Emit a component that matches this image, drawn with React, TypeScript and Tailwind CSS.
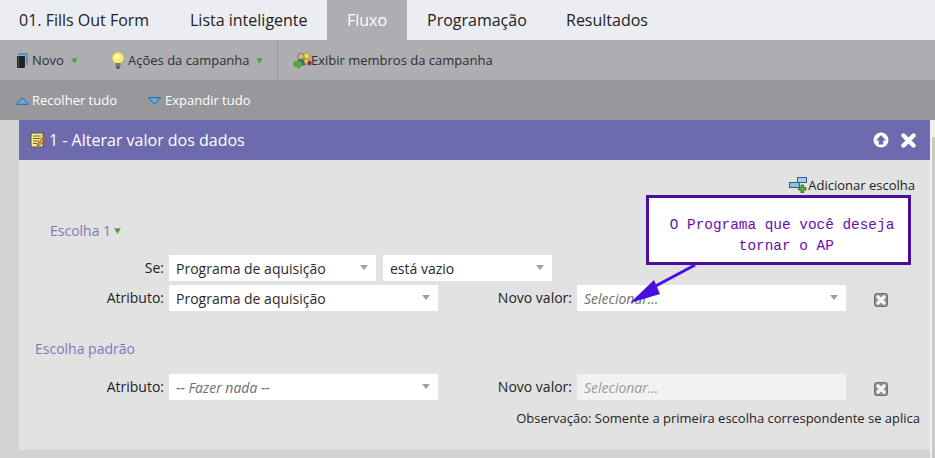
const sans = "font-['Open_Sans',sans-serif]";

function GreenCaret({ className = "" }: { className?: string }) {
  return (
    <svg width="7" height="6" viewBox="0 0 7 6" className={className}>
      <path d="M0.300 0.300H6.700L3.500 5.800Z" fill="#4f9a34" stroke="#86bd68" strokeWidth="0.500" />
    </svg>
  );
}

function Book() {
  return (
    <svg width="12" height="16" viewBox="0 0 12 16">
      <path d="M3 2.500V1h8v11" fill="none" stroke="#3f86c4" strokeWidth="1.400" />
      <rect x="1" y="3" width="8" height="12" rx="1" fill="#222" />
      <rect x="2" y="4" width="1" height="10" fill="#555" />
    </svg>
  );
}

function Bulb() {
  return (
    <svg width="14" height="17" viewBox="0 0 14 17">
      <circle cx="7" cy="6" r="5.600" fill="#fbf06a" stroke="#d8c850" strokeWidth="0.800" />
      <circle cx="6" cy="4.800" r="2.400" fill="#fffbc8" />
      <rect x="4.500" y="11" width="5" height="4" fill="#77777c" />
      <rect x="5.500" y="15" width="3" height="1.500" fill="#333" />
    </svg>
  );
}

function People() {
  return (
    <svg width="19" height="17" viewBox="0 0 19 17" className="mr-[-1px]">
      <circle cx="13.500" cy="4" r="3.200" fill="#f4d860" stroke="#8c7430" strokeWidth="0.600" />
      <path d="M10 12c0-3.500 1-5 3.500-5s3.500 1.500 3.500 5z" fill="#e8c45a" stroke="#8c7430" strokeWidth="0.600" />
      <circle cx="8" cy="4.500" r="3.200" fill="#d8b48a" stroke="#5d4a38" strokeWidth="0.600" />
      <path d="M4.500 13c0-4 1-5.500 3.500-5.500s3.500 1.500 3.500 5.500z" fill="#3f6f9f" stroke="#2d4a68" strokeWidth="0.600" />
      <circle cx="16.500" cy="11" r="2.200" fill="#a82a2a" />
      <path d="M1 10h4V7.500l5 4.500-5 4.500V14H1z" fill="#58b038" stroke="#2f7a20" strokeWidth="0.600" />
    </svg>
  );
}

function Up() {
  return (
    <svg width="13" height="8" viewBox="0 0 13 8">
      <path d="M6.500 0.700L12.500 7.300H0.500Z" fill="#62aee4" stroke="#1f5f92" strokeWidth="0.900" />
    </svg>
  );
}

function Down() {
  return (
    <svg width="13" height="8" viewBox="0 0 13 8">
      <path d="M0.500 0.700H12.500L6.500 7.300Z" fill="#62aee4" stroke="#1f5f92" strokeWidth="0.900" />
    </svg>
  );
}

function Note() {
  return (
    <svg width="16" height="16" viewBox="0 0 16 16">
      <rect x="1" y="1" width="12" height="14" fill="#f8ec9a" stroke="#5a5230" strokeWidth="1" />
      <path d="M3 4h8M3 6.500h8M3 9h6M3 11.500h4" stroke="#6b6235" strokeWidth="1" />
      <path d="M7 14l1-3 6-6 2 2-6 6z" fill="#e8a040" stroke="#7a3a20" strokeWidth="0.700" />
      <path d="M12.500 6.500l2 2" stroke="#c03a30" strokeWidth="1.400" />
    </svg>
  );
}

function AddChoice() {
  return (
    <svg width="19" height="16" viewBox="0 0 19 16">
      <rect x="0.500" y="5.500" width="10" height="5" fill="#8cc0e4" stroke="#2e5f88" />
      <rect x="8.500" y="0.500" width="9" height="5" fill="#a8d0ec" stroke="#2e5f88" />
      <path d="M12 8h2.500V10.500H17V13h-2.500v3H12v-3H9.500V10.500H12z" fill="#55b040" stroke="#1f6a20" strokeWidth="0.800" />
    </svg>
  );
}

function RemoveBtn() {
  return (
    <svg width="14" height="14" viewBox="0 0 14 14">
      <rect x="0.500" y="0.500" width="13" height="13" rx="2" fill="#8f8f8f" stroke="#6f6f6f" />
      <path d="M4 4l6 6M10 4l-6 6" stroke="#f4f4f4" strokeWidth="3.600" strokeLinecap="round" />
    </svg>
  );
}

function Select({ w, text, italic, disabled, noCaret }: { w: string; text: string; italic?: boolean; disabled?: boolean; noCaret?: boolean }) {
  return (
    <div className={`${w} h-[26px] flex items-center justify-between pl-[7px] pr-[8px] text-[14px] ${disabled ? "bg-[#f2f2f2]" : "bg-white"} ${italic ? (disabled ? "italic text-[#9a9a9a]" : "italic text-[#6f6f6f]") : "text-[#2b2b2b]"}`}>
      <span className="whitespace-nowrap">{text}</span>
      {!noCaret && (
        <svg width="8" height="5" viewBox="0 0 8 5" className="mr-[-1px] mb-[2px] shrink-0 w-[10px]">
          <path d="M0 0H8L4 5Z" fill="#a0a0a0" />
        </svg>
      )}
    </div>
  );
}

function Label({ children, w }: { children: string; w: string }) {
  return <div className={`${w} text-right text-[14px] text-[#222] pr-[5px] whitespace-nowrap pb-[2px]`}>{children}</div>;
}

export default function App() {
  return (
    <div className={`${sans} w-[935px] h-[458px] bg-[#d3d3d3] overflow-hidden relative`}>
      <div className="h-10 bg-[#ecedf3] flex text-[16px] text-[#222]">
        <div className="pl-[19px] w-[170px] flex items-center whitespace-nowrap">01. Fills Out Form</div>
        <div className="pl-[20px] w-[157px] flex items-center whitespace-nowrap">Lista inteligente</div>
        <div className="w-[80px] bg-[#aeadb2] text-white flex items-center justify-center">Fluxo</div>
        <div className="pl-[20px] w-[139px] flex items-center whitespace-nowrap">Programação</div>
        <div className="pl-[20px] flex items-center whitespace-nowrap">Resultados</div>
      </div>
      <div className="h-10 bg-[#aeadb2] flex items-center text-[13px] text-[#2f2f33]">
        <div className="pl-[16px] w-[111px] pt-[1px] flex items-center">
          <Book />
          <span className="ml-[4px]">Novo</span>
          <GreenCaret className="ml-[7px]" />
        </div>
        <div className="w-[167px] h-full pt-[1px] flex items-center border-r border-[#98979c]">
          <Bulb />
          <span className="ml-[3px]">Ações da campanha</span>
          <GreenCaret className="ml-[6px]" />
        </div>
        <div className="pl-[15px] pt-[1px] flex items-center">
          <People />
          <span>Exibir membros da campanha</span>
        </div>
      </div>
      <div className="h-10 bg-[#98979c] pt-[1px] flex items-center text-[13px] text-white">
        <div className="pl-[16px] w-[148px] flex items-center">
          <Up />
          <span className="ml-[3px]">Recolher tudo</span>
        </div>
        <div className="flex items-center">
          <Down />
          <span className="ml-[4px]">Expandir tudo</span>
        </div>
      </div>
      <div className="flex items-start">
        <div className="ml-[19px] w-[911px] h-[330px] bg-[#e2e2e2]">
          <div className="h-10 bg-[#6e6aae] flex items-center justify-between pl-[11px] pr-[14px] text-white">
            <div className="flex items-center text-[16px]">
              <Note />
              <span className="ml-[3px]">1 - Alterar valor dos dados</span>
            </div>
            <div className="flex items-center gap-[12px]">
              <svg width="16" height="16" viewBox="0 0 16 16">
                <circle cx="8" cy="8" r="7.500" fill="#fff" />
                <path d="M8 3L13 8.500H10.300V12.500H5.700V8.500H3Z" fill="#6e6aae" />
              </svg>
              <svg width="15" height="15" viewBox="0 0 15 15">
                <path d="M2.500 2.500L12.500 12.500M12.500 2.500L2.500 12.500" stroke="#fff" strokeWidth="4.400" strokeLinecap="round" />
              </svg>
            </div>
          </div>
          <div className="flex flex-col">
            <div className="h-[51px] flex items-end justify-end pr-[15px] text-[13px] text-[#222]">
              <div className="flex items-center pb-[16px]">
                <AddChoice />
                <span>Adicionar escolha</span>
              </div>
            </div>
            <div className="h-[38px] pl-[31px] flex items-center text-[14px] text-[#7d79b5] pt-[1px]">
              Escolha 1<GreenCaret className="ml-[3px] mt-[1px]" />
            </div>
            <div className="flex items-center mt-[6px]">
              <Label w="w-[150px]">Se:</Label>
              <Select w="w-[207px]" text="Programa de aquisição" />
              <div className="w-[7px]" />
              <Select w="w-[169px]" text="está vazio" />
            </div>
            <div className="flex items-center mt-[4px]">
              <Label w="w-[150px]">Atributo:</Label>
              <Select w="w-[269px]" text="Programa de aquisição" />
              <Label w="w-[139px]">Novo valor:</Label>
              <Select w="w-[269px]" text="Selecionar..." italic />
              <div className="ml-[28px] mt-[4px]"><RemoveBtn /></div>
            </div>
            <div className="pl-[16px] text-[14px] text-[#7d79b5] mt-[28px] h-[18px] flex items-center">Escolha padrão</div>
            <div className="flex items-center mt-[17px]">
              <Label w="w-[150px]">Atributo:</Label>
              <Select w="w-[269px]" text="-- Fazer nada --" italic />
              <Label w="w-[139px]">Novo valor:</Label>
              <Select w="w-[269px]" text="Selecionar..." italic disabled noCaret />
              <div className="ml-[28px] mt-[4px]"><RemoveBtn /></div>
            </div>
            <div className="mt-[9px] pr-[10px] text-right text-[13px] leading-[18px] text-[#222]">Observação: Somente a primeira escolha correspondente se aplica</div>
          </div>
        </div>
        <div className="w-[5px] h-[338px] bg-[#f0f0f0] pt-[17px] pl-[2px]">
          <div className="h-full bg-[#c8c8c8]" />
        </div>
      </div>
      <div className="absolute left-[646px] top-[195px] w-[265px] h-[70px] bg-white border-[3px] border-[#4b0d9c] flex justify-center text-center font-['Liberation_Mono',monospace] text-[14.4px] leading-[21px] text-[#6a0dad] pt-[17px] pl-[7px] whitespace-pre-line">
        {"O Programa que você deseja\n\u00a0tornar o AP"}
      </div>
      <svg className="absolute left-[600px] top-[255px]" width="110" height="55" viewBox="0 0 110 55">
        <path d="M95 10L50 34" stroke="#4a0fe0" strokeWidth="3" />
        <path d="M30 48L54 25L60 39Z" fill="#4a0fe0" />
      </svg>
    </div>
  );
}
